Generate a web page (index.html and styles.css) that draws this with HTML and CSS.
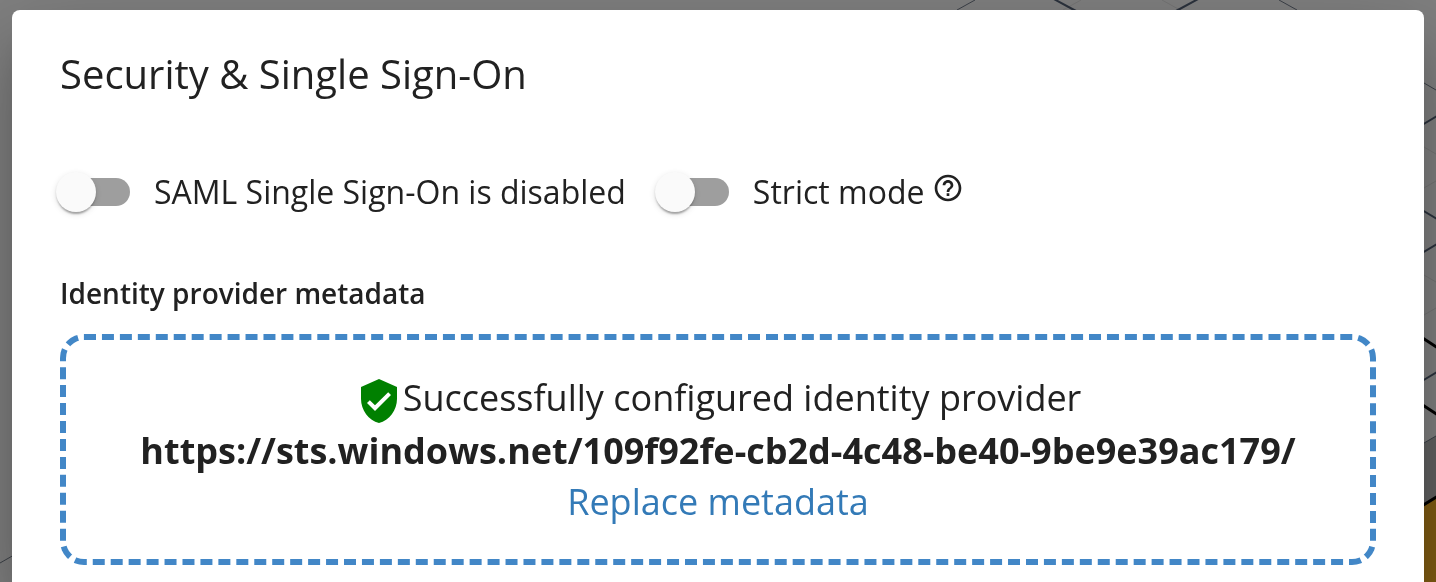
FILE: index.html
```html
<!DOCTYPE html>
<html lang="en">
<head>
<meta charset="utf-8">
<title>Security &amp; Single Sign-On</title>
<link rel="stylesheet" href="styles.css">
</head>
<body>
<svg class="backdrop" viewBox="0 0 1436 582" preserveAspectRatio="xMaxYMin slice" aria-hidden="true">
  <path class="panel" d="M1400 457 1436 436V497L1400 519Z"/>
  <path class="gold" d="M1400 519 1436 497V582H1400Z"/>
  <g class="faint">
    <path d="M1081 0 1063 10M1162 0 1180 10M1412 140 1436 154M1412 195 1436 181M1412 268 1436 282M1412 322 1436 308"/>
  </g>
  <g class="thin">
    <path d="M975 0 957 10M1279 0 1297 10M1412 76 1436 90M1412 450 1436 436M0 563 14 555"/>
  </g>
  <g class="medium">
    <path d="M1052-2 1076 11M1200-2 1176 11M1412 131 1437 116M1412 204 1437 219M1412 259 1437 244M1412 387 1437 372"/>
  </g>
  <g class="thick">
    <path d="M1412 331 1438 348M1412 398 1438 415M1412 512 1438 496"/>
  </g>
</svg>
<main class="dialog">
  <h1 class="title">Security &amp; Single Sign-On</h1>
  <div class="options">
    <label class="option"><input class="switch" type="checkbox" role="switch">SAML Single Sign-On is disabled</label>
    <div class="option-group">
      <label class="option"><input class="switch" type="checkbox" role="switch">Strict mode</label>
      <button class="help" type="button" aria-label="About strict mode">
        <svg class="help-icon" viewBox="0 0 24 24" aria-hidden="true"><path d="M11 18h2v-2h-2v2zm1-16C6.48 2 2 6.48 2 12s4.48 10 10 10 10-4.48 10-10S17.52 2 12 2zm0 18c-4.41 0-8-3.59-8-8s3.59-8 8-8 8 3.59 8 8-3.59 8-8 8zm0-14c-2.21 0-4 1.79-4 4h2c0-1.1.9-2 2-2s2 .9 2 2c0 2-3 1.75-3 5h2c0-2.25 3-2.5 3-5 0-2.21-1.79-4-4-4z"/></svg>
      </button>
    </div>
  </div>
  <h2 class="subtitle">Identity provider metadata</h2>
  <section class="dropzone">
    <p class="status"><svg class="shield" viewBox="0 0 24 24" aria-hidden="true"><path d="M12 1 3 5v6c0 5.55 3.84 10.74 9 12 5.16-1.26 9-6.45 9-12V5l-9-4zm-2 16-4-4 1.41-1.41L10 14.17l6.59-6.59L18 9l-8 8z"/></svg>Successfully configured identity provider</p>
    <strong class="provider">https://sts.windows.net/109f92fe-cb2d-4c48-be40-9be9e39ac179/</strong>
    <a class="replace" href="#">Replace metadata</a>
  </section>
</main>
</body>
</html>
```
FILE: styles.css
```css
* {
  box-sizing: border-box;
}

html {
  background: #808080;
  overflow: hidden;
}

body {
  margin: 0;
  padding: 10px 12px 0;
  color: #212121;
  font-family: "Open Sans", "Noto Sans", sans-serif;
}

.backdrop {
  position: fixed;
  inset: 0;
  width: 100%;
  height: 100%;
  fill: none;
}

.panel { fill: #626262; }
.gold { fill: #805c12; }
.faint { stroke: #757575; stroke-width: 1; }
.thin { stroke: #3c4148; stroke-width: 1; }
.medium { stroke: #2b323d; stroke-width: 2; }
.thick { stroke: #000; stroke-width: 3; }

.dialog {
  position: relative;
  min-height: calc(100vh - 10px);
  padding: 36px 48px 17px;
  border-radius: 8px 8px 0 0;
  background: #fff;
  box-shadow:
    0 22px 30px -14px rgba(0, 0, 0, 0.2),
    0 48px 76px 6px rgba(0, 0, 0, 0.14),
    0 18px 92px 16px rgba(0, 0, 0, 0.12);
}

.title {
  margin: 0 0 66px;
  font-size: 40px;
  font-weight: 400;
  line-height: 56px;
}

.options {
  display: flex;
  flex-wrap: wrap;
  gap: 16px 33px;
  font-size: 32px;
  line-height: 48px;
}

.option-group,
.option {
  display: flex;
  align-items: center;
}

.option {
  gap: 24px;
  padding-left: 2px;
}

.switch {
  position: relative;
  flex: none;
  width: 68px;
  height: 28px;
  margin: 0;
  border-radius: 14px;
  background: #9e9e9e;
  appearance: none;
}

.switch::before {
  content: "";
  position: absolute;
  top: -6px;
  left: -6px;
  width: 40px;
  height: 40px;
  border-radius: 50%;
  background: #fafafa;
  box-shadow:
    0 4px 2px -2px rgba(0, 0, 0, 0.2),
    0 2px 2px rgba(0, 0, 0, 0.14),
    0 2px 6px rgba(0, 0, 0, 0.12);
}

.switch:checked {
  background: #9ec3e6;
}

.switch:checked::before {
  left: 34px;
  background: #4287c7;
}

.help {
  display: flex;
  margin: 0 0 8px 8px;
  padding: 0;
  border: 0;
  background: none;
  color: inherit;
}

.help-icon {
  width: 32px;
  height: 32px;
  fill: currentColor;
}

.subtitle {
  margin: 57px 0 21px;
  font-size: 28px;
  font-weight: 600;
  line-height: 40px;
}

.dropzone {
  display: flex;
  flex-direction: column;
  align-items: center;
  padding: 29px 32px 32px;
  border: 6px dashed #4287c7;
  border-radius: 24px;
  font-size: 36px;
  line-height: 51px;
  text-align: center;
}

.status {
  display: flex;
  align-items: center;
  margin: 0;
}

.shield {
  flex: none;
  width: 48px;
  height: 48px;
  margin-top: 8px;
  fill: #008000;
}

.provider {
  font-weight: 700;
  overflow-wrap: anywhere;
}

.replace {
  color: #337ab7;
  text-decoration: none;
}
```
